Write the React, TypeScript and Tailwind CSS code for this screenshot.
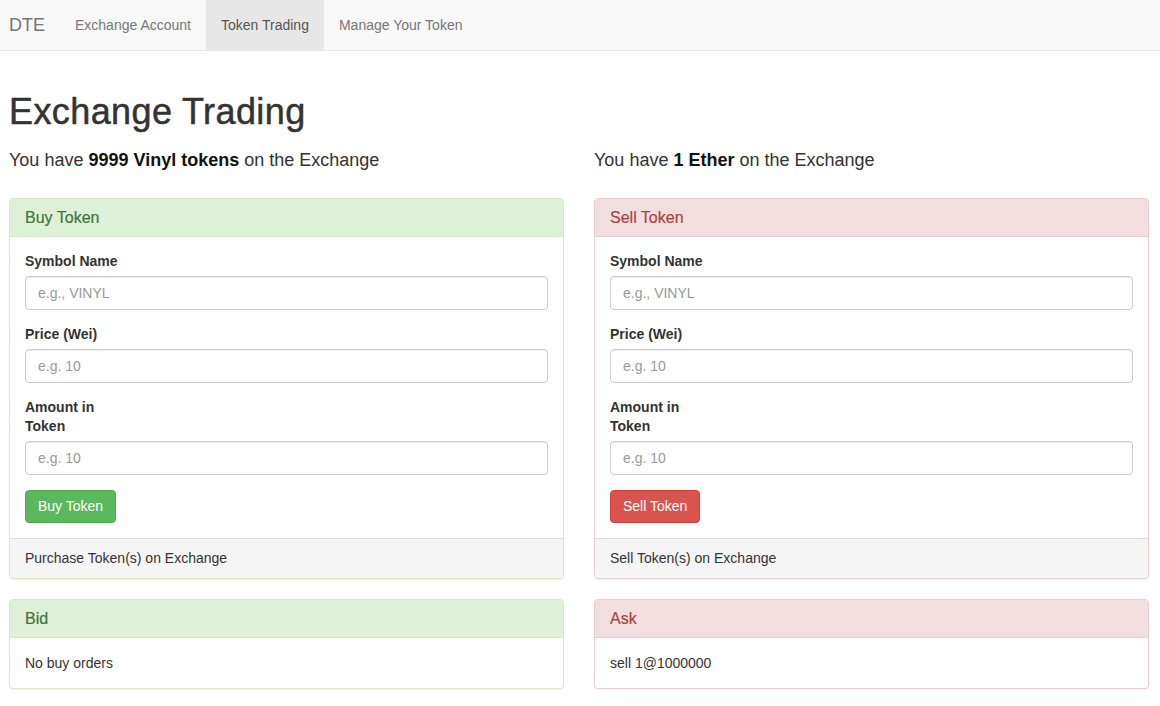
import React from "react";

type Variant = "success" | "danger";

const styles = {
  success: {
    panel: "border-[#d6e9c6]",
    head: "bg-[#dff0d8] border-[#d6e9c6] text-[#3c763d]",
    btn: "bg-[#5cb85c] border-[#4cae4c]",
  },
  danger: {
    panel: "border-[#ebccd1]",
    head: "bg-[#f2dede] border-[#ebccd1] text-[#a94442]",
    btn: "bg-[#d9534f] border-[#d43f3a]",
  },
};

function Panel({
  variant,
  title,
  children,
  footer,
}: {
  variant: Variant;
  title: string;
  children: React.ReactNode;
  footer?: string;
}) {
  const s = styles[variant];
  return (
    <div
      className={`mb-[20px] rounded-[4px] border bg-white shadow-[0_1px_1px_rgba(0,0,0,0.05)] ${s.panel}`}
    >
      <div className={`rounded-t-[3px] border-b px-[15px] py-[10px] ${s.head}`}>
        <h3 className="text-[16px] leading-[17px] [-webkit-text-stroke:0.2px_currentColor]">{title}</h3>
      </div>
      <div className="p-[15px]">{children}</div>
      {footer && (
        <div className="rounded-b-[3px] border-t border-[#ddd] bg-[#f5f5f5] px-[15px] py-[10px] leading-[19px]">
          {footer}
        </div>
      )}
    </div>
  );
}

function Field({
  label,
  placeholder,
  narrow,
}: {
  label: string;
  placeholder: string;
  narrow?: boolean;
}) {
  return (
    <div className="mb-[15px]">
      <label
        className={`mb-[5px] block text-[14px] font-bold leading-[19px] ${narrow ? "w-[80px]" : ""}`}
      >
        {label}
      </label>
      <input
        className="block h-[34px] w-full rounded-[4px] border border-[#ccc] bg-white px-[12px] py-[6px] text-[14px] text-[#555] shadow-[inset_0_1px_1px_rgba(0,0,0,0.075)] outline-none placeholder:text-[#999]"
        placeholder={placeholder}
      />
    </div>
  );
}

function TradeForm({ variant, btn }: { variant: Variant; btn: string }) {
  return (
    <div>
      <Field label="Symbol Name" placeholder="e.g., VINYL" />
      <Field label="Price (Wei)" placeholder="e.g. 10" />
      <Field label="Amount in Token" placeholder="e.g. 10" narrow />
      <button
        className={`block h-[33px] rounded-[4px] border px-[12px] text-[14px] leading-[20px] text-white ${styles[variant].btn}`}
      >
        {btn}
      </button>
    </div>
  );
}

export default function App() {
  return (
    <div
      className="min-h-[706px] bg-white text-[14px] leading-[20px] text-[#333]"
      style={{ fontFamily: '"Liberation Sans", Arial, sans-serif' }}
    >
      <nav className="flex h-[51px] border-b border-[#e7e7e7] bg-[#f8f8f8]">
        <a className="flex items-center pl-[9px] pr-[15px] text-[18px] text-[#777]">DTE</a>
        <a className="flex items-center px-[15px] text-[#777]">Exchange Account</a>
        <a className="flex items-center bg-[#e7e7e7] px-[15px] text-[#555]">Token Trading</a>
        <a className="flex items-center px-[15px] text-[#777]">Manage Your Token</a>
      </nav>
      <div className="pl-[9px] pr-[11px]">
        <h1 className="mt-[41px] text-[36px] leading-[39.6px] tracking-[0.4px] text-[#333] [-webkit-text-stroke:0.5px_#333]">
          Exchange Trading
        </h1>
        <div className="mt-[18px] grid grid-cols-2 gap-[30px]">
          <div>
            <h4 className="text-[18px] leading-[20px]">
              You have <b className="text-[#111]">9999 Vinyl tokens</b> on the Exchange
            </h4>
            <div className="mt-[28px]">
              <Panel variant="success" title="Buy Token" footer="Purchase Token(s) on Exchange">
                <TradeForm variant="success" btn="Buy Token" />
              </Panel>
              <Panel variant="success" title="Bid">
                No buy orders
              </Panel>
            </div>
          </div>
          <div>
            <h4 className="text-[18px] leading-[20px]">
              You have <b className="text-[#111]">1 Ether</b> on the Exchange
            </h4>
            <div className="mt-[28px]">
              <Panel variant="danger" title="Sell Token" footer="Sell Token(s) on Exchange">
                <TradeForm variant="danger" btn="Sell Token" />
              </Panel>
              <Panel variant="danger" title="Ask">
                sell 1@1000000
              </Panel>
            </div>
          </div>
        </div>
      </div>
    </div>
  );
}
